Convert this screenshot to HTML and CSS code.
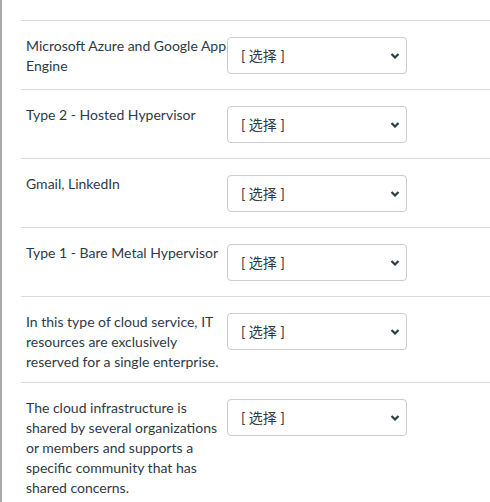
FILE: index.html
```html
<!DOCTYPE html>
<html>
<head>
<meta charset="utf-8">
<link rel="stylesheet" href="styles.css">
</head>
<body>
<div class="page">
  <div class="answers">
    <div class="row">
      <div class="label">Microsoft Azure and Google App Engine</div>
      <div class="pick"><span class="pick-text">[ 选择 ]</span><svg class="chev" viewBox="0 0 10 6" width="10" height="6"><path d="M1.5 1 L5 4.5 L8.5 1" fill="none" stroke="#2d3b45" stroke-width="2.2"/></svg></div>
    </div>
    <div class="row">
      <div class="label">Type 2 - Hosted Hypervisor</div>
      <div class="pick"><span class="pick-text">[ 选择 ]</span><svg class="chev" viewBox="0 0 10 6" width="10" height="6"><path d="M1.5 1 L5 4.5 L8.5 1" fill="none" stroke="#2d3b45" stroke-width="2.2"/></svg></div>
    </div>
    <div class="row">
      <div class="label">Gmail, LinkedIn</div>
      <div class="pick"><span class="pick-text">[ 选择 ]</span><svg class="chev" viewBox="0 0 10 6" width="10" height="6"><path d="M1.5 1 L5 4.5 L8.5 1" fill="none" stroke="#2d3b45" stroke-width="2.2"/></svg></div>
    </div>
    <div class="row">
      <div class="label">Type 1 - Bare Metal Hypervisor</div>
      <div class="pick"><span class="pick-text">[ 选择 ]</span><svg class="chev" viewBox="0 0 10 6" width="10" height="6"><path d="M1.5 1 L5 4.5 L8.5 1" fill="none" stroke="#2d3b45" stroke-width="2.2"/></svg></div>
    </div>
    <div class="row">
      <div class="label">In this type of cloud service, IT resources are exclusively reserved for a single enterprise.</div>
      <div class="pick"><span class="pick-text">[ 选择 ]</span><svg class="chev" viewBox="0 0 10 6" width="10" height="6"><path d="M1.5 1 L5 4.5 L8.5 1" fill="none" stroke="#2d3b45" stroke-width="2.2"/></svg></div>
    </div>
    <div class="row">
      <div class="label">The cloud infrastructure is shared by several organizations or members and supports a specific community that has shared concerns.</div>
      <div class="pick"><span class="pick-text">[ 选择 ]</span><svg class="chev" viewBox="0 0 10 6" width="10" height="6"><path d="M1.5 1 L5 4.5 L8.5 1" fill="none" stroke="#2d3b45" stroke-width="2.2"/></svg></div>
    </div>
  </div>
</div>
</body>
</html>
```

FILE: styles.css
```css
html, body {
  margin: 0;
  padding: 0;
  background: #ffffff;
}
body {
  font-family: Lato, "Noto Sans CJK SC", sans-serif;
  font-size: 14px;
  line-height: 20px;
  color: #2d3b45;
}
.page {
  border-left: 2px solid #a8a8a8;
  min-height: 502px;
  box-sizing: border-box;
  padding: 20px 0 0 19px;
}
.answers {
  display: flex;
  flex-direction: column;
}
.row {
  display: flex;
  align-items: flex-start;
  border-top: 1px solid #dadada;
  padding: 15px 0 10px 5px;
}
.label {
  flex: 0 0 203px;
  margin-right: -2px;
}
.pick {
  position: relative;
  box-sizing: border-box;
  width: 180px;
  height: 37px;
  margin: 1px 0 5px 0;
  border: 1px solid #c7cdd1;
  border-radius: 4px;
  background: #fff;
  display: flex;
  align-items: center;
  padding-left: 13px;
}
.pick-text {
  font-family: Lato, "Noto Sans CJK SC", sans-serif;
  font-size: 14px;
  color: #2d3b45;
}
.chev {
  position: absolute;
  right: 6px;
  top: 15px;
}
```
